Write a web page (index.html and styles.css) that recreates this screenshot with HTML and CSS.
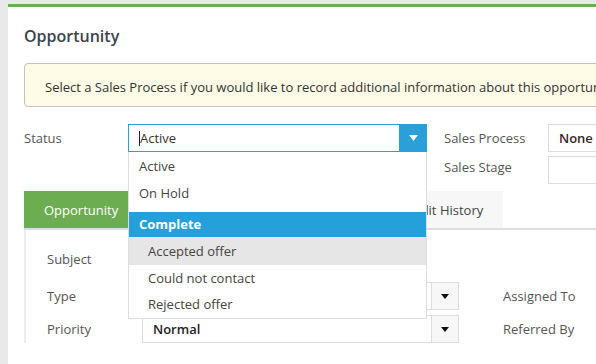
FILE: index.html
```html
<!DOCTYPE html>
<html>
<head>
<meta charset="utf-8">
<link rel="stylesheet" href="styles.css">
</head>
<body>
<div class="card">
  <h1 class="title">Opportunity</h1>
  <div class="notice">Select a Sales Process if you would like to record additional information about this opportunity and track it through its stages.</div>

  <div class="form-top">
    <div class="lbl">Status</div>
    <div class="combo">
      <div class="combo-input"><span class="caret"></span>Active</div>
      <div class="combo-btn"><svg width="9" height="6" viewBox="0 0 9 6"><path d="M0 0H9L4.5 6Z" fill="#fff"/></svg></div>
      <ul class="menu">
        <li class="opt o1">Active</li>
        <li class="opt o2">On Hold</li>
        <li class="grp">Complete</li>
        <li class="sub hl">Accepted offer</li>
        <li class="sub">Could not contact</li>
        <li class="sub">Rejected offer</li>
      </ul>
    </div>
    <div class="lbl rl">Sales Process</div>
    <div class="box">None</div>
    <div></div>
    <div></div>
    <div class="lbl rl stage">Sales Stage</div>
    <div class="box"></div>
  </div>

  <div class="tabs">
    <div class="tab active">Opportunity</div>
    <div class="tab">Contacts</div>
    <div class="tab">Tasks</div>
    <div class="tab">Notes</div>
    <div class="tab">Audit History</div>
  </div>

  <div class="panel">
    <div class="row r-subj">
      <div class="plbl">Subject</div>
    </div>
    <div class="row r-type">
      <div class="plbl">Type</div>
      <div class="sel"><div class="sel-val"></div><div class="sel-btn"><svg width="8" height="5" viewBox="0 0 8 5"><path d="M0 0H8L4 5Z" fill="#111"/></svg></div></div>
      <div class="plbl rlbl">Assigned To</div>
    </div>
    <div class="row r-pri">
      <div class="plbl">Priority</div>
      <div class="sel"><div class="sel-val">Normal</div><div class="sel-btn"><svg width="8" height="5" viewBox="0 0 8 5"><path d="M0 0H8L4 5Z" fill="#111"/></svg></div></div>
      <div class="plbl rlbl">Referred By</div>
    </div>
  </div>
</div>
</body>
</html>
```

FILE: styles.css
```css
* { box-sizing: border-box; }
html, body { margin: 0; padding: 0; }
body {
  background: #e9e9ea;
  font-family: "Open Sans", "Liberation Sans", sans-serif;
  font-size: 13px;
  color: #555;
  overflow: hidden;
  width: 596px;
  height: 364px;
  padding: 4px 0 0 8px;
}
.card {
  width: 760px;
  height: 400px;
  background: #fff;
  border-top: 3px solid #6dad52;
  padding: 17px 16px 0 16px;
}
.title {
  margin: 0;
  font-size: 16px;
  font-weight: 600;
  color: #3c4350;
  line-height: 24px;
}
.notice {
  margin-top: 15px;
  height: 44px;
  border: 1px solid #c2c2c2;
  border-radius: 4px;
  background: #fefbe6;
  color: #333;
  padding: 4px 0 0 20px;
  line-height: 38px;
  white-space: nowrap;
  overflow: hidden;
}
.form-top {
  margin-top: 17px;
  display: grid;
  grid-template-columns: 104px 299px 121px 200px;
  grid-template-rows: 28px 28px;
  column-gap: 0;
  row-gap: 4px;
}
.form-top .rl { padding-left: 17px; }
.form-top .lbl { line-height: 28px; color: #555; }
.form-top .stage { line-height: 22px; }
.combo {
  position: relative;
  display: flex;
  border: 1px solid #2a9fd8;
  height: 28px;
  background: #fff;
  z-index: 5;
}
.combo-input {
  flex: 1;
  color: #333;
  line-height: 26px;
  padding-left: 10px;
  display: flex;
  align-items: center;
}
.caret {
  display: inline-block;
  width: 1px;
  height: 15px;
  background: #222;
}
.combo-btn {
  width: 28px;
  margin: -1px -1px -1px 0;
  background: #2a9fd8;
  display: flex;
  align-items: center;
  justify-content: center;
}
.menu {
  position: absolute;
  left: -1px;
  top: 27px;
  width: 299px;
  margin: 0;
  padding: 1px 0 1px 0;
  list-style: none;
  background: #fff;
  border: 1px solid #ddd;
  border-top: none;
}
.menu li { padding-left: 10px; color: #444; }
.menu .o1 { height: 27px; line-height: 27px; }
.menu .o2 { height: 26px; line-height: 26px; margin-bottom: 6px; }
.menu .grp {
  height: 25px; line-height: 25px;
  background: #26a0da;
  color: #fff;
  font-weight: 700;
}
.menu .sub { padding-left: 19px; height: 26px; line-height: 27px; }
.menu .hl { background: #e6e6e6; height: 28px; line-height: 29px; }

.tabs {
  margin-top: 7px;
  display: flex;
  border-bottom: 2px solid #ddd;
  height: 39px;
}
.tab {
  padding: 0 20px;
  line-height: 38px;
  background: #f7f7f7;
  color: #444;
  margin-right: 1px;
}
.tab.active {
  background: #6dad52;
  color: #fff;
}
.panel {
  border-left: 2px solid #eee;
  padding: 15px 0 0 21px;
}
.row { display: flex; align-items: center; height: 28px; }
.r-subj { margin-bottom: 9px; }
.r-type { margin-bottom: 5px; }
.plbl { width: 95px; color: #555; }
.rlbl { width: auto; margin-left: 44px; }
.sel {
  width: 317px;
  height: 28px;
  border: 1px solid #ddd;
  display: flex;
}
.sel-val {
  flex: 1;
  padding-left: 10px;
  line-height: 26px;
  color: #222;
  font-weight: 600;
}
.sel-btn {
  width: 27px;
  border-left: 1px solid #ddd;
  background: #f7f7f7;
  display: flex;
  align-items: center;
  justify-content: center;
}
.box {
  height: 28px;
  border: 1px solid #ddd;
  line-height: 26px;
  padding-left: 10px;
  color: #3a2424;
  font-weight: 600;
}
```
